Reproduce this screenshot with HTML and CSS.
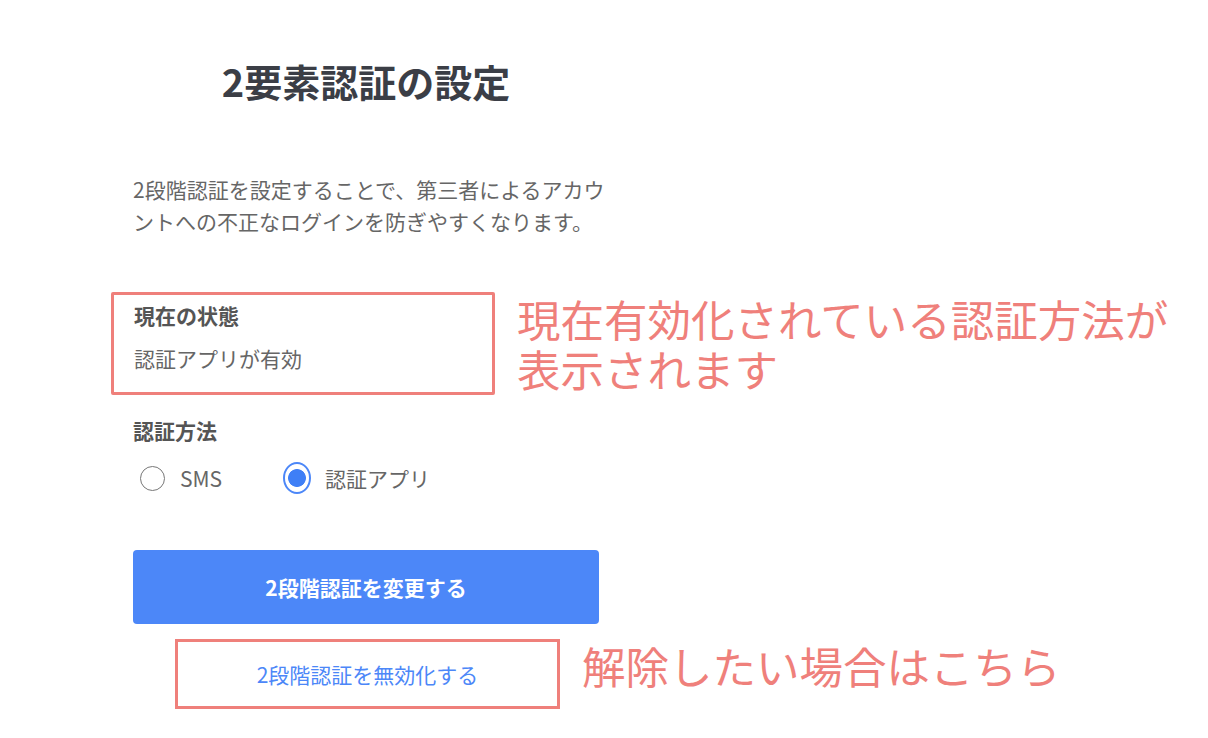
FILE: index.html
```html
<!DOCTYPE html>
<html lang="ja">
<head>
<meta charset="utf-8">
<title>2要素認証の設定</title>
<link rel="stylesheet" href="styles.css">
</head>
<body>
<main class="page">
  <h1 class="title">2要素認証の設定</h1>
  <p class="desc">2段階認証を設定することで、第三者によるアカウ<br>ントへの不正なログインを防ぎやすくなります。</p>

  <div class="status-row">
    <section class="status-box">
      <div class="label">現在の状態</div>
      <div class="value">認証アプリが有効</div>
    </section>
    <p class="note note-status">現在有効化されている認証方法が<br>表示されます</p>
  </div>

  <div class="label method-label">認証方法</div>
  <div class="radios">
    <label class="radio-item">
      <span class="radio"></span>
      <span class="radio-text">SMS</span>
    </label>
    <label class="radio-item">
      <span class="radio checked"></span>
      <span class="radio-text">認証アプリ</span>
    </label>
  </div>

  <button class="primary">2段階認証を変更する</button>

  <div class="link-row">
    <a class="disable-link">2段階認証を無効化する</a>
    <p class="note note-link">解除したい場合はこちら</p>
  </div>
</main>
</body>
</html>
```

FILE: styles.css
```css
* { box-sizing: border-box; }

html, body {
  margin: 0;
  padding: 0;
  background: #ffffff;
}

body {
  font-family: "Noto Sans CJK JP", "Noto Sans", sans-serif;
  color: #555;
  width: 1208px;
  height: 738px;
  overflow: hidden;
}

.page {
  padding-left: 133px;
  width: 660px;
}

.title {
  margin: 59px 0 0;
  font-size: 38px;
  line-height: 44px;
  font-weight: 700;
  color: #3b3e46;
  text-align: center;
  width: 466px;
}

.desc {
  margin: 70px 0 0;
  width: 510px;
  font-size: 21px;
  line-height: 32px;
  color: #666;
}

.status-row {
  display: flex;
  align-items: flex-start;
  margin: 55px 0 0 -22px;
  width: 1100px;
}

.status-box {
  flex: none;
  width: 384px;
  height: 103px;
  border: 3px solid #ef807b;
  border-radius: 2px;
  padding: 6px 0 0 20px;
}

.label {
  font-size: 21px;
  line-height: 28px;
  font-weight: 700;
  color: #555;
}

.value {
  margin-top: 15px;
  font-size: 21px;
  line-height: 28px;
  color: #666;
}

.note {
  margin: 0;
  color: #ef807b;
  font-size: 43.5px;
  line-height: 50px;
  font-weight: 400;
  white-space: nowrap;
}

.note-status {
  margin: 2px 0 0 22px;
}

.method-label {
  margin-top: 21px;
}

.radios {
  display: flex;
  align-items: center;
  gap: 61px;
  margin: 20px 0 0 5px;
  height: 28px;
}

.radio-item {
  display: flex;
  align-items: center;
  gap: 14px;
}

.radio {
  width: 28px;
  height: 28px;
  display: flex;
  align-items: center;
  justify-content: center;
}

.radio::before {
  content: "";
  width: 23px;
  height: 23px;
  border-radius: 50%;
  border: 1.5px solid #777;
}

.radio.checked::before {
  width: 28px;
  height: 28px;
  border: 2.5px solid #4c87f8;
  background: radial-gradient(circle, #3f7ff6 0 8.5px, #fff 9.3px);
}

.radio-text {
  font-size: 21px;
  line-height: 28px;
  color: #666;
}

.primary {
  display: block;
  margin-top: 58px;
  width: 466px;
  height: 74px;
  border: none;
  border-radius: 4px;
  background: #4c87f8;
  color: #fff;
  font-family: inherit;
  font-size: 21px;
  font-weight: 700;
  padding: 0;
}

.link-row {
  display: flex;
  align-items: flex-start;
  margin: 15px 0 0 42px;
  width: 1000px;
}

.disable-link {
  flex: none;
  width: 385px;
  height: 70px;
  border: 3px solid #ef807b;
  display: flex;
  align-items: center;
  justify-content: center;
  color: #4c87f8;
  font-size: 21px;
  text-decoration: none;
}

.note-link {
  margin: 2px 0 0 22px;
}
```
